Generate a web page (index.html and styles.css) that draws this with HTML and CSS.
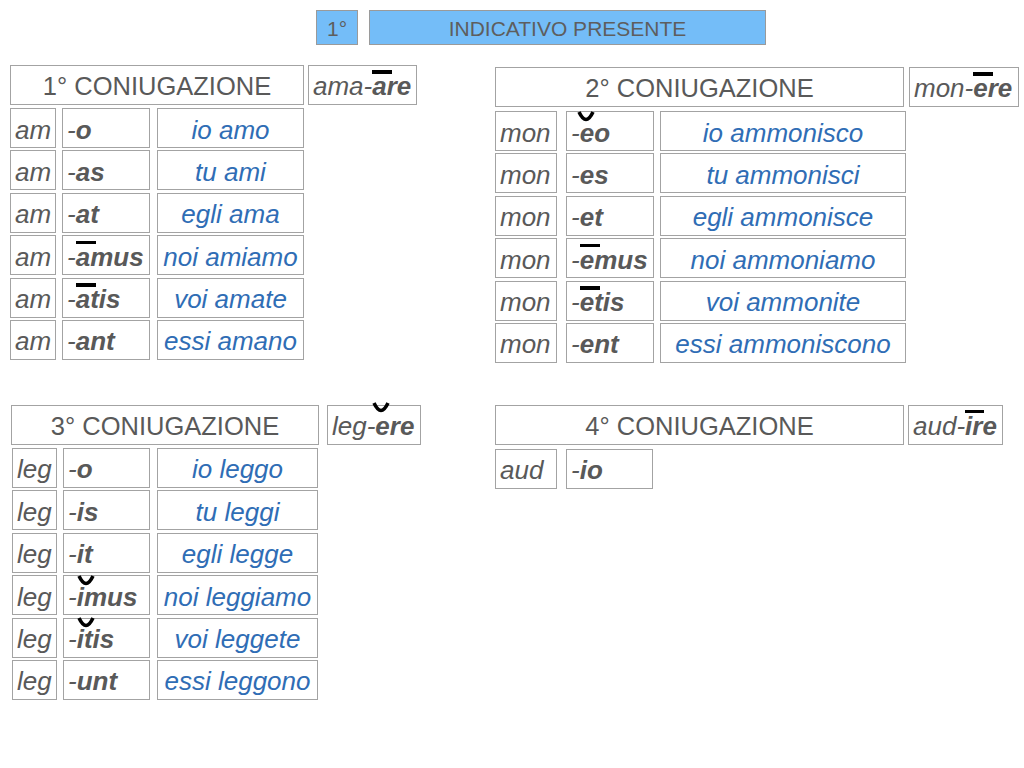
FILE: index.html
```html
<!DOCTYPE html>
<html lang="it">
<head>
<meta charset="utf-8">
<title>Indicativo presente</title>
<link rel="stylesheet" href="styles.css">
</head>
<body>
<header class="top">
  <div class="box num">1°</div>
  <div class="box tense">INDICATIVO PRESENTE</div>
</header>
<main class="board">
  <section class="conj c1">
    <div class="head">
      <div class="box title">1° CONIUGAZIONE</div>
      <div class="box inf">ama-<b><span class="mac">a</span>re</b></div>
    </div>
    <div class="rows">
      <div class="row"><div class="box stem">am</div><div class="box end">-<b>o</b></div><div class="box tr">io amo</div></div>
      <div class="row"><div class="box stem">am</div><div class="box end">-<b>as</b></div><div class="box tr">tu ami</div></div>
      <div class="row"><div class="box stem">am</div><div class="box end">-<b>at</b></div><div class="box tr">egli ama</div></div>
      <div class="row"><div class="box stem">am</div><div class="box end">-<b><span class="mac">a</span>mus</b></div><div class="box tr">noi amiamo</div></div>
      <div class="row"><div class="box stem">am</div><div class="box end">-<b><span class="mac">a</span>tis</b></div><div class="box tr">voi amate</div></div>
      <div class="row"><div class="box stem">am</div><div class="box end">-<b>ant</b></div><div class="box tr">essi amano</div></div>
    </div>
  </section>

  <section class="conj c2">
    <div class="head">
      <div class="box title">2° CONIUGAZIONE</div>
      <div class="box inf">mon-<b><span class="mac">e</span>re</b></div>
    </div>
    <div class="rows">
      <div class="row"><div class="box stem">mon</div><div class="box end">-<b><span class="brv">e<svg class="brv-mark" viewBox="0 0 18 11" aria-hidden="true"><path d="M2 1 Q9 16 16 1"/></svg></span>o</b></div><div class="box tr">io ammonisco</div></div>
      <div class="row"><div class="box stem">mon</div><div class="box end">-<b>es</b></div><div class="box tr">tu ammonisci</div></div>
      <div class="row"><div class="box stem">mon</div><div class="box end">-<b>et</b></div><div class="box tr">egli ammonisce</div></div>
      <div class="row"><div class="box stem">mon</div><div class="box end">-<b><span class="mac">e</span>mus</b></div><div class="box tr">noi ammoniamo</div></div>
      <div class="row"><div class="box stem">mon</div><div class="box end">-<b><span class="mac">e</span>tis</b></div><div class="box tr">voi ammonite</div></div>
      <div class="row"><div class="box stem">mon</div><div class="box end">-<b>ent</b></div><div class="box tr">essi ammoniscono</div></div>
    </div>
  </section>

  <section class="conj c3">
    <div class="head">
      <div class="box title">3° CONIUGAZIONE</div>
      <div class="box inf">leg-<b><span class="brv">e<svg class="brv-mark" viewBox="0 0 18 11" aria-hidden="true"><path d="M2 1 Q9 16 16 1"/></svg></span>re</b></div>
    </div>
    <div class="rows">
      <div class="row"><div class="box stem">leg</div><div class="box end">-<b>o</b></div><div class="box tr">io leggo</div></div>
      <div class="row"><div class="box stem">leg</div><div class="box end">-<b>is</b></div><div class="box tr">tu leggi</div></div>
      <div class="row"><div class="box stem">leg</div><div class="box end">-<b>it</b></div><div class="box tr">egli legge</div></div>
      <div class="row"><div class="box stem">leg</div><div class="box end">-<b><span class="brv i">i<svg class="brv-mark" viewBox="0 0 18 11" aria-hidden="true"><path d="M2 1 Q9 16 16 1"/></svg></span>mus</b></div><div class="box tr">noi leggiamo</div></div>
      <div class="row"><div class="box stem">leg</div><div class="box end">-<b><span class="brv i">i<svg class="brv-mark" viewBox="0 0 18 11" aria-hidden="true"><path d="M2 1 Q9 16 16 1"/></svg></span>tis</b></div><div class="box tr">voi leggete</div></div>
      <div class="row"><div class="box stem">leg</div><div class="box end">-<b>unt</b></div><div class="box tr">essi leggono</div></div>
    </div>
  </section>

  <section class="conj c4">
    <div class="head">
      <div class="box title">4° CONIUGAZIONE</div>
      <div class="box inf">aud-<b><span class="mac i">i</span>re</b></div>
    </div>
    <div class="rows">
      <div class="row"><div class="box stem">aud</div><div class="box end">-<b>io</b></div></div>
    </div>
  </section>
</main>
</body>
</html>
```

FILE: styles.css
```css
html, body {
  margin: 0;
  padding: 0;
  background: #ffffff;
}

body {
  width: 1024px;
  height: 768px;
  overflow: hidden;
  font-family: "Liberation Sans", Arial, sans-serif;
  color: #595959;
}

.box {
  box-sizing: border-box;
  border: 1px solid #a3a3a3;
  background: #ffffff;
  display: flex;
  align-items: center;
  white-space: nowrap;
}

/* top header */
.top {
  display: flex;
  gap: 11px;
  padding: 10px 0 0 316px;
}

.top .box {
  height: 35px;
  background: #74bdf8;
  border-color: #9a9a9a;
  font-size: 21px;
  justify-content: center;
  padding-top: 2px;
  color: #5e5e5e;
}

.num { width: 42px; }
.tense { width: 397px; }

/* board of conjugations */
.board {
  display: grid;
  grid-template-columns: 485px auto;
  row-gap: 42px;
  padding-left: 10px;
  margin-top: 20px;
  align-items: start;
}

.conj {
  display: flex;
  flex-direction: column;
  gap: var(--hgap, 3px);
}

.head {
  display: flex;
  gap: var(--hg);
}

.title {
  width: var(--title);
  height: 40px;
  justify-content: center;
  font-size: 25.5px;
  padding-top: 3px;
}

.inf {
  width: var(--inf);
  height: 40px;
  font-size: 26px;
  font-style: italic;
  padding: 3px 0 0 4px;
}

.rows {
  display: flex;
  flex-direction: column;
  gap: 2.4px;
}

.row {
  display: flex;
}

.row .box {
  height: 40px;
  font-size: 26px;
  font-style: italic;
  padding-top: 4px;
}

.stem {
  width: var(--stem);
  margin-right: var(--g1);
  padding-left: 4px;
}

.end {
  width: var(--end);
  margin-right: var(--g2);
  padding-left: 4px;
}

.tr {
  width: var(--tr);
  justify-content: center;
  color: #2f6db5;
}

b {
  font-weight: bold;
}

/* diacritics over the long / short vowels */
.mac, .brv {
  position: relative;
}

.mac::before {
  content: "";
  position: absolute;
  left: 0;
  top: -1px;
  width: 20px;
  height: 3.5px;
  background: #000000;
}

.mac.i::before {
  left: 0;
  width: 19px;
}

.brv-mark {
  position: absolute;
  left: -3px;
  top: -7px;
  width: 18px;
  height: 11px;
  overflow: visible;
}

.brv-mark path {
  fill: none;
  stroke: #000000;
  stroke-width: 3.6;
}

.brv.i .brv-mark {
  left: -1px;
  width: 20px;
}

.inf .brv-mark {
  top: -9px;
}

/* per-section column sizes */
.c1 {
  --title: 294px; --hg: 4px; --inf: 109px;
  --stem: 46px; --g1: 6px; --end: 88px; --g2: 7px; --tr: 147px;
}

.c2 {
  --title: 409px; --hg: 5px; --inf: 110px;
  --stem: 62px; --g1: 9px; --end: 88px; --g2: 6px; --tr: 246px;
  --hgap: 4px;
  margin-top: 2px;
}

.c3 {
  --title: 308px; --hg: 8px; --inf: 94px;
  --stem: 45px; --g1: 6px; --end: 87px; --g2: 7px; --tr: 161px;
  margin-left: 1px;
}

.c3 .rows {
  padding-left: 1px;
}

.c4 {
  --title: 409px; --hg: 4px; --inf: 95px;
  --stem: 62px; --g1: 9px; --end: 87px; --g2: 0px;
  --hgap: 4px;
}
```
